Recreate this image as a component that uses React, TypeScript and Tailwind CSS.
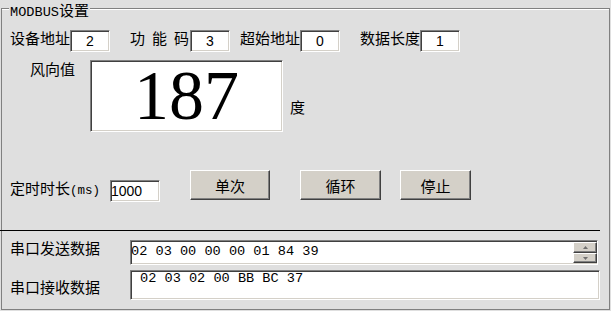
import React from "react";

const sunken =
  "bg-white border border-t-[#808080] border-l-[#808080] border-b-white border-r-white shadow-[inset_1px_1px_0_#404040,inset_-1px_-1px_0_#d4d0c8]";
const raised =
  "bg-[#d4d0c8] border border-t-white border-l-white border-b-[#404040] border-r-[#404040] shadow-[inset_-1px_-1px_0_#808080]";

function NumBox({ value, w }: { value: string; w: string }) {
  return (
    <div className={`${sunken} ${w} h-[22px] flex items-center justify-center font-['Liberation_Sans',sans-serif] text-[14px] leading-[14px]`}>
      {value}
    </div>
  );
}

function Btn({ label, w }: { label: string; w: string }) {
  return (
    <div className={`${raised} ${w} h-[30px] flex items-center justify-center`}>{label}</div>
  );
}

function Tri({ up }: { up: boolean }) {
  return (
    <svg width="5" height="3" viewBox="0 0 5 3">
      {up ? <path d="M2.5 0 L5 3 L0 3 Z" fill="#707070" /> : <path d="M0 0 L5 0 L2.5 3 Z" fill="#707070" />}
    </svg>
  );
}

export default function App() {
  return (
    <div className="w-[611px] h-[311px] bg-[#dfdfdf] overflow-hidden pt-[8px] pl-[1px] font-['Noto_Sans_CJK_SC',sans-serif] text-[15px] leading-[15px] text-black">
      <div className="relative w-[609px] h-[302px] border border-[#808080] shadow-[inset_0_1px_0_#ffffff]">
        <div className="absolute left-[7px] -top-[7px] px-[1px] bg-[#dfdfdf] h-[15px] whitespace-nowrap">
          <span className="font-['Liberation_Mono',monospace] text-[13.6px]">MODBUS</span>
          <span>设置</span>
        </div>

        <div className="flex flex-col pt-[21px]">
          {/* row 1 */}
          <div className="flex items-start pl-[8px]">
            <span className="w-[60px] whitespace-nowrap">设备地址</span>
            <NumBox value="2" w="w-[40px]" />
            <span className="ml-[20px] w-[60px] flex justify-between pr-[1px]">
              <span>功</span>
              <span>能</span>
              <span>码</span>
            </span>
            <NumBox value="3" w="w-[40px]" />
            <span className="ml-[10px] w-[60px] whitespace-nowrap">超始地址</span>
            <NumBox value="0" w="w-[40px]" />
            <span className="ml-[20px] w-[60px] whitespace-nowrap">数据长度</span>
            <NumBox value="1" w="w-[40px]" />
          </div>

          {/* row 2 */}
          <div className="flex items-start pl-[28px] mt-[8px]">
            <span className="mt-[1px] w-[45px] whitespace-nowrap">风向值</span>
            <div className={`${sunken} ml-[15px] w-[193px] h-[72px] flex items-center justify-center`}>
              <span className="font-['Liberation_Serif',serif] text-[70px] leading-[70px]">187</span>
            </div>
            <span className="ml-[7px] mt-[39px]">度</span>
          </div>

          {/* row 3 */}
          <div className="flex items-start pl-[8px] mt-[38px] h-[32px]">
            <span className="block mt-[10px] w-[100px] whitespace-nowrap">
              定时时长<span className="font-['Liberation_Mono',monospace] text-[12.5px]">(ms)</span>
            </span>
            <div className={`${sunken} mt-[10px] w-[50px] h-[22px] flex items-center font-['Liberation_Sans',sans-serif] text-[14px] leading-[14px]`}>
              1000
            </div>
            <div className="ml-[30px]">
              <Btn label="单次" w="w-[80px]" />
            </div>
            <div className="ml-[30px]">
              <Btn label="循环" w="w-[81px]" />
            </div>
            <div className="ml-[19px]">
              <Btn label="停止" w="w-[71px]" />
            </div>
          </div>

          {/* separator */}
          <div className="mt-[28px] -ml-[2px] w-[600px] h-[1px] bg-black" />

          {/* row 4 */}
          <div className="flex items-start pl-[8px] mt-[9px]">
            <span className="w-[120px] whitespace-nowrap">串口发送数据</span>
            <div className={`${sunken} w-[468px] h-[25px] flex items-stretch`}>
              <div className="flex-1 pt-[4px] font-['Liberation_Mono',monospace] text-[13.6px] leading-[13px] whitespace-pre">
                02 03 00 00 00 01 84 39
              </div>
              <div className="flex flex-col w-[24px] pt-[1px]">
                <div className={`${raised} h-[11px] flex items-center justify-center`}>
                  <Tri up />
                </div>
                <div className={`${raised} h-[10px] flex items-center justify-center`}>
                  <Tri up={false} />
                </div>
              </div>
            </div>
          </div>

          {/* row 5 */}
          <div className="flex items-center pl-[8px] mt-[5px]">
            <span className="w-[120px] mt-[2px] whitespace-nowrap">串口接收数据</span>
            <div className={`${sunken} w-[470px] h-[30px] pl-[9px] pt-[1px] font-['Liberation_Mono',monospace] text-[13.6px] leading-[13px] whitespace-pre`}>
              02 03 02 00 BB BC 37
            </div>
          </div>
        </div>
      </div>
    </div>
  );
}
